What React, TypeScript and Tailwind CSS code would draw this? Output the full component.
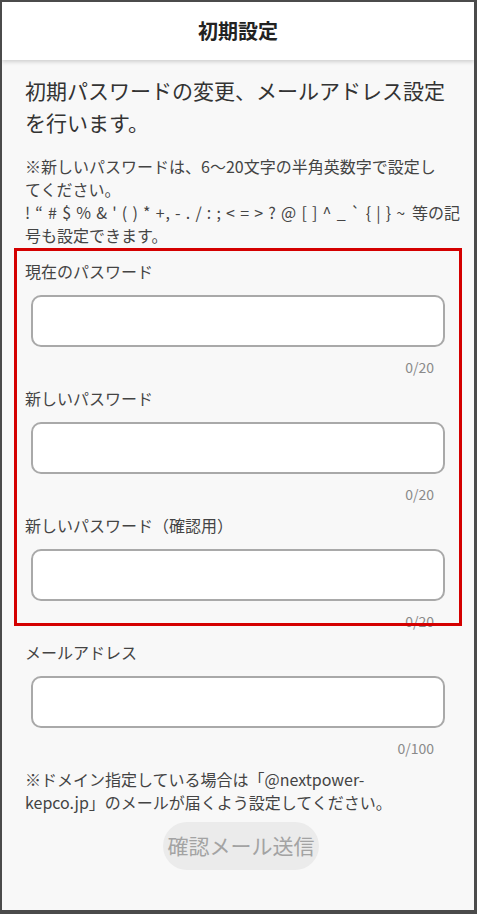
import React from "react";

type Field = {
  id: string;
  label: string;
  max: number;
  type: string;
};

const fields: Field[] = [
  { id: "current", label: "現在のパスワード", max: 20, type: "password" },
  { id: "next", label: "新しいパスワード", max: 20, type: "password" },
  { id: "confirm", label: "新しいパスワード（確認用）", max: 20, type: "password" },
  { id: "mail", label: "メールアドレス", max: 100, type: "email" },
];

const SYMBOLS = "! “ # $ % & ' ( ) * +, - . / : ; < = > ? @ [ ] ^ _ ` { | } ~";

const FormField = ({ field }: { field: Field }) => (
  <div className="flex flex-col">
    <label
      htmlFor={field.id}
      className="text-[16px] leading-[23px] text-[#444]"
    >
      {field.label}
    </label>
    <input
      id={field.id}
      type={field.type}
      className="ml-[6px] mt-[12px] h-[52px] w-[414px] rounded-[10px] border-2 border-[#a9a9a9] bg-white px-3 text-[16px] outline-none"
    />
    <p className="mt-[10px] w-[409px] text-right text-[14px] leading-[20px] text-[#8a8a8a]">
      0/{field.max}
    </p>
  </div>
);

export default function App() {
  return (
    <div className="relative flex h-[914px] w-[477px] flex-col overflow-hidden border-b-[4px] border-l-2 border-r-[3px] border-t-2 border-[#4b4b4b] bg-[#f8f8f8] font-['Noto_Sans_CJK_JP',_'Noto_Sans',sans-serif]">
      <header className="relative z-10 flex h-[58px] shrink-0 items-center justify-center bg-white shadow-[0_2px_4px_rgba(0,0,0,0.16)]">
        <h1 className="text-[20px] font-bold text-[#222]">初期設定</h1>
      </header>

      <main className="flex flex-col pl-[23px] pr-[27px]">
        <p className="mt-[14px] whitespace-nowrap text-[21px] leading-[32px] text-[#333]">
          初期パスワードの変更、メールアドレス設定
          <br />
          を行います。
        </p>
        <p className="mt-[17px] whitespace-nowrap text-[16px] leading-[23px] text-[#444]">
          ※新しいパスワードは、6〜20文字の半角英数字で設定し
          <br />
          てください。
          <br />
          <span className="tracking-[0.8px]">{SYMBOLS}</span>
          <span className="ml-[6px]">等の記</span>
          <br />
          号も設定できます。
        </p>

        <div className="mt-[13px] flex flex-col gap-[10px]">
          {fields.map((field) => (
            <FormField key={field.id} field={field} />
          ))}
        </div>

        <p className="mt-[10px] whitespace-nowrap text-[16px] leading-[23px] text-[#444]">
          ※ドメイン指定している場合は「@nextpower-
          <br />
          kepco.jp」のメールが届くよう設定してください。
        </p>

        <button
          type="button"
          disabled
          className="ml-[138px] mt-[8px] h-[48px] w-[156px] rounded-full bg-[#ebebeb] text-[21px] text-[#a3a3a3]"
        >
          確認メール送信
        </button>
      </main>

      {/* highlight annotation */}
      <div className="pointer-events-none absolute left-[12px] top-[246px] h-[378px] w-[448px] border-[3px] border-[#d40000]" />
    </div>
  );
}
